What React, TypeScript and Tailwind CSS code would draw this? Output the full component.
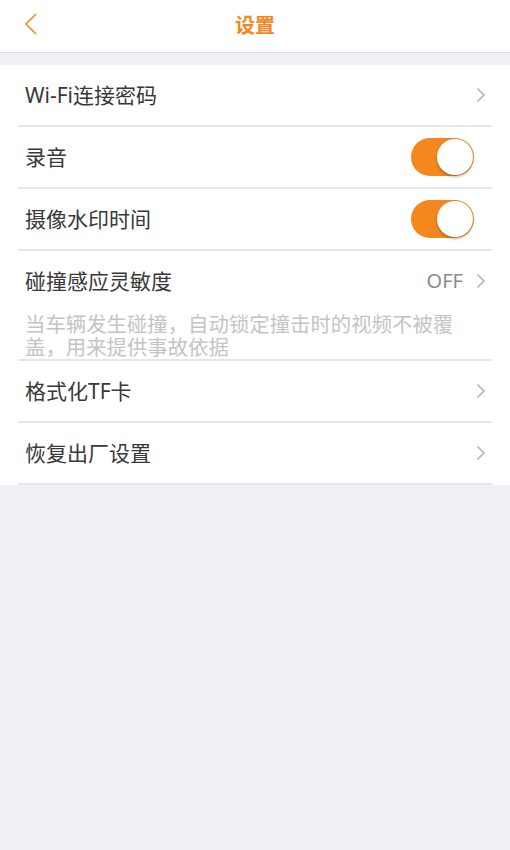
const font = {
  fontFamily:
    '"Noto Sans", "Noto Sans CJK SC", "Liberation Sans", sans-serif',
};

const Chevron = () => (
  <svg width="10" height="16" viewBox="0 0 10 16" fill="none" className="ml-[13px]">
    <path d="M1.5 1.5L8 8l-6.5 6.5" stroke="#b4b4b4" strokeWidth="1.6" />
  </svg>
);

const Toggle = () => (
  <div className="w-[63px] h-[38px] mr-[12px] rounded-full bg-[#f5871f] flex items-center justify-end pr-[1px]">
    <div className="w-[36px] h-[36px] rounded-full bg-white shadow-[0_2px_3px_rgba(0,0,0,0.25)]" />
  </div>
);

const Row: React.FC<any> = ({ label, right, children }) => {
  return (
    <div className="mx-[18px] border-b-2 border-[#e6e6e6]">
      <div className="h-[60px] flex items-center justify-between pl-[7px] pr-[6px]">
        <span className="text-[21px] text-[#383838] translate-y-[1px]">{label}</span>
        {right}
      </div>
      {children}
    </div>
  );
};

export default function App() {
  return (
    <div className="w-[510px] h-[850px] bg-[#efeff4]" style={font}>
      <div className="h-[53px] bg-white border-b border-[#d9d9d9] flex items-center justify-center relative">
        <svg
          width="14"
          height="22"
          viewBox="0 0 14 22"
          fill="none"
          className="absolute left-[24px] top-[13px]"
        >
          <path d="M12 1L2 11l10 10" stroke="#f5871f" strokeWidth="1.6" />
        </svg>
        <span className="text-[20px] text-[#f5871f] font-bold">设置</span>
      </div>
      <div className="mt-[12px] bg-white">
        <Row label="Wi-Fi连接密码" right={<Chevron />} />
        <Row label="录音" right={<Toggle />} />
        <Row label="摄像水印时间" right={<Toggle />} />
        <Row
          label="碰撞感应灵敏度"
          right={
            <div className="flex items-center">
              <span className="text-[20px] text-[#8a8a8a]">OFF</span>
              <Chevron />
            </div>
          }
        >
          <p className="pl-[7px] pr-[32px] mt-[2px] text-[20.4px] leading-[23px] text-[#c4c4c4]">
            当车辆发生碰撞，自动锁定撞击时的视频不被覆盖，用来提供事故依据
          </p>
        </Row>
        <Row label="格式化TF卡" right={<Chevron />} />
        <Row label="恢复出厂设置" right={<Chevron />} />
      </div>
    </div>
  );
}
